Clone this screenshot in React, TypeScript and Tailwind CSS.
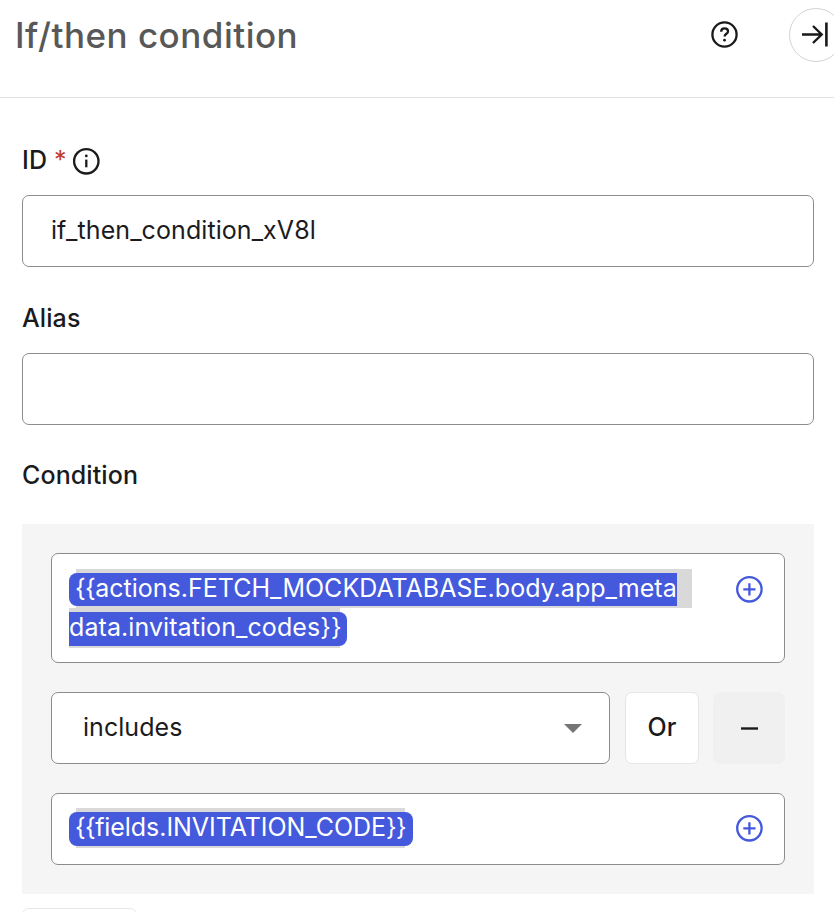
import type { ReactNode } from "react";

function PlusCircle() {
  return (
    <svg width="28" height="28" viewBox="0 0 28 28" fill="none" stroke="#4459dc" strokeWidth="2.3" className="shrink-0">
      <circle cx="14.4" cy="14.3" r="12.2" />
      <path d="M14.4 8.2v12.2M8.3 14.3h12.2" />
    </svg>
  );
}

function Label({ children }: { children: ReactNode }) {
  return <div className="flex h-8 items-center text-[25px] leading-8 font-medium tracking-[0.1px]">{children}</div>;
}

function Header() {
  return (
    <header className="flex h-[98px] items-start border-b border-[#e2e2e2] pl-[15px]">
      <h1 className="h-[70px] w-[694px] shrink-0 text-[35px] leading-[70px] font-medium tracking-[0.5px] whitespace-nowrap text-[#585858]">
        If/then condition
      </h1>
      <svg width="30" height="30" viewBox="0 0 30 30" fill="none" stroke="#1a1a1a" strokeWidth="2.3" className="mt-[19px] shrink-0">
        <circle cx="15.5" cy="15.5" r="12.1" />
        <path d="M12.2 12.7c0-2.1 1.3-3.3 3.4-3.3s3.4 1.2 3.4 3c0 2.3-3.4 2.5-3.4 5.1" />
        <circle cx="15.5" cy="21.2" r="1.4" fill="#1a1a1a" stroke="none" />
      </svg>
      <button className="mt-2 ml-[50px] -mr-[9px] h-[54px] w-[54px] shrink-0 rounded-full border border-[#d4d4d4]">
        <svg width="52" height="52" viewBox="0 0 52 52" fill="none" stroke="#191919" strokeWidth="2.4">
          <path d="M12 25.5h19.5M23 17l8.7 8.5L23 34" />
          <path d="M36.4 13.5v24" strokeWidth="2.6" />
        </svg>
      </button>
    </header>
  );
}

export default function App() {
  return (
    <div className="h-[912px] w-[834px] overflow-hidden bg-white font-['Inter','Liberation_Sans',sans-serif] text-[#1b1b1d]">
      <Header />
      <main className="pt-[46px] pr-5 pl-[22px]">
        <Label>
          <span>ID</span>
          <span className="ml-[7px] w-[18px] font-normal text-[#c43b31]">*</span>
          <svg width="28" height="28" viewBox="0 0 28 28" fill="none" stroke="#1b1b1d" strokeWidth="2.3" className="mt-[2px]">
            <circle cx="14.3" cy="14.3" r="12.2" />
            <path d="M14.3 12.6v7.7" />
            <circle cx="14.3" cy="8.9" r="1.4" fill="#1b1b1d" stroke="none" />
          </svg>
        </Label>
        <div className="mt-[19px] flex h-[72px] items-center rounded-[7px] border border-[#8c8c8c] pb-[2px] pl-7 text-[25px] leading-8 tracking-[0.07px]">
          if_then_condition_xV8l
        </div>
        <div className="mt-[35px]"><Label>Alias</Label></div>
        <div className="mt-[19px] h-[72px] rounded-[7px] border border-[#8c8c8c]" />
        <div className="mt-[34px]"><Label>Condition</Label></div>

        <section className="mt-[33px] h-[370px] bg-[#f5f5f5] px-[29px] pt-[29px]">
          <div className="flex h-[110px] rounded-[7px] border border-[#8c8c8c] bg-white pt-[15px] pr-[21px] pl-[17px] text-[25px] whitespace-nowrap text-white">
            <div className="flex-1">
              <div className="ml-[7px] h-[39px] w-[616px] bg-[#d9d9d9] pt-1">
                <div className="-ml-[7px] h-[33px] w-[608px] rounded-l-[8px] bg-[#4459dc] pl-[6px] leading-[31px] tracking-[0.02px]">
                  <span className="tracking-[-0.6px]">{"{{"}</span>
                  {"actions.FETCH_MOCKDATABASE.body.app_meta"}
                </div>
              </div>
              <div className="h-10 w-[271px] bg-[#d9d9d9] pt-1">
                <div className="h-[34px] w-[278px] rounded-r-[8px] bg-[#4459dc] leading-[31px] tracking-[0.08px]">
                  {"data.invitation_codes}}"}
                </div>
              </div>
            </div>
            <div className="mt-[6px]"><PlusCircle /></div>
          </div>

          <div className="mt-[29px] flex h-[72px]">
            <div className="flex w-[559px] items-center justify-between rounded-[7px] border border-[#8c8c8c] bg-white pr-[27px] pl-[31px] text-[25px] tracking-[0.05px]">
              <span>includes</span>
              <svg width="18" height="9" viewBox="0 0 18 9" fill="#757575"><path d="M0 0h18L9 9z" /></svg>
            </div>
            <button className="ml-[15px] w-[74px] rounded-[7px] border border-[#e6e6e6] bg-white text-[25px] font-medium">Or</button>
            <button className="ml-[14px] flex w-[72px] items-center justify-center rounded-[7px] bg-[#f0f0f0]">
              <svg width="17" height="3" viewBox="0 0 17 3" fill="#1b1b1d"><path d="M0 .3h17v2.4H0z" /></svg>
            </button>
          </div>

          <div className="mt-[29px] flex h-[72px] rounded-[7px] border border-[#8c8c8c] bg-white pt-[14px] pr-[21px] pl-[17px] text-[25px] whitespace-nowrap text-white">
            <div className="flex-1">
              <div className="ml-[7px] h-10 w-[329px] bg-[#d9d9d9] pt-1">
                <div className="-ml-[7px] h-[34px] w-[344px] rounded-[8px] bg-[#4459dc] pl-[6px] leading-[31px] tracking-[-0.05px]">
                  <span className="tracking-[-0.6px]">{"{{"}</span>
                  {"fields.INVITATION_CODE"}
                  <span className="tracking-[-0.6px]">{"}}"}</span>
                </div>
              </div>
            </div>
            <div className="mt-[6px]"><PlusCircle /></div>
          </div>
        </section>
        <div className="mt-[14px] h-[72px] w-[115px] rounded-[7px] border border-[#e6e6e6]" />
      </main>
    </div>
  );
}
